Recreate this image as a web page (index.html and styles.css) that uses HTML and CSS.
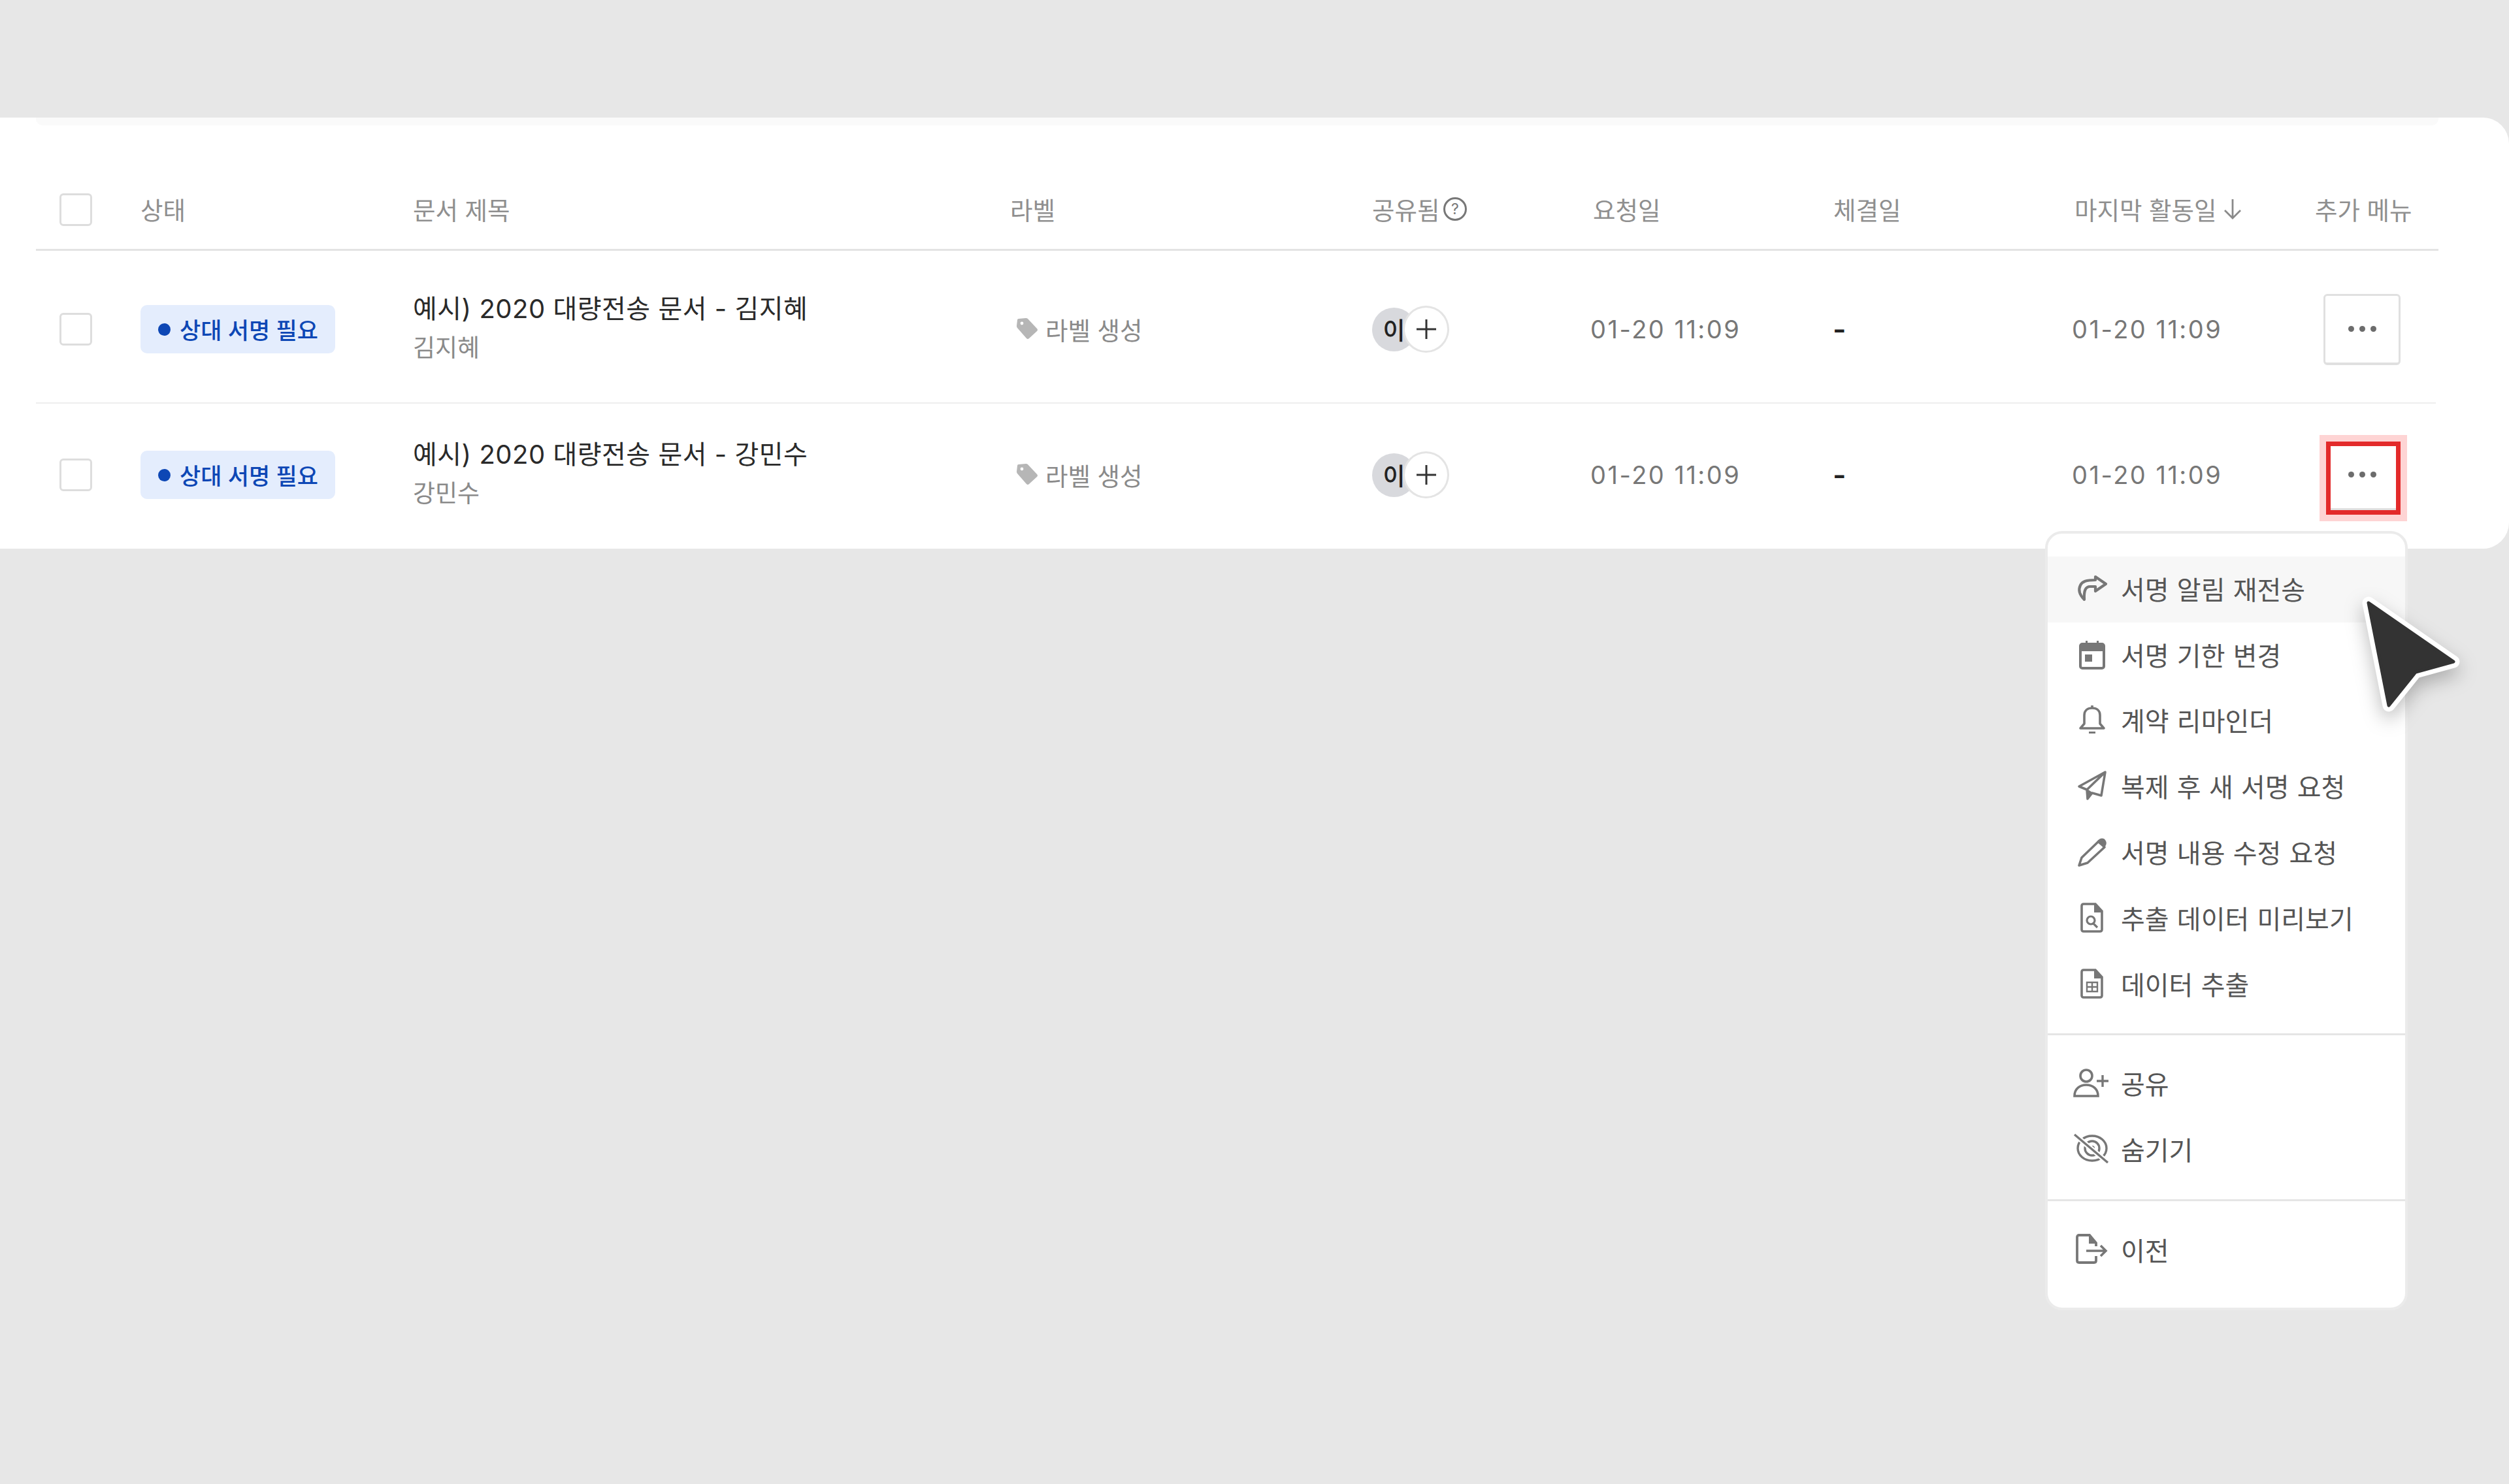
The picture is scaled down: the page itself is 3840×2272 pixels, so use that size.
FILE: index.html
```html
<!DOCTYPE html>
<html lang="ko">
<head>
  <meta charset="UTF-8">
  <meta name="viewport" content="width=device-width, initial-scale=1.0">
  <title>문서 목록</title>
  <link rel="stylesheet" href="styles.css">
</head>
<body>
  <div class="page">
    <div class="panel">
      <div class="panel-strip"></div>

      <div class="row row-head">
        <div class="cell-check"><span class="checkbox"></span></div>
        <div>상태</div>
        <div>문서 제목</div>
        <div>라벨</div>
        <div class="head-icon">공유됨
          <svg class="help" width="38" height="38" viewBox="0 0 38 38"><circle cx="19" cy="19" r="16.5" fill="none" stroke="#777" stroke-width="3"/><text x="19" y="27" text-anchor="middle" font-size="23" fill="#777">?</text></svg>
        </div>
        <div>요청일</div>
        <div>체결일</div>
        <div class="head-icon head-sort">마지막 활동일
          <svg width="30" height="34" viewBox="0 0 30 34"><path d="M15 2V31M3 19L15 31L27 19" fill="none" stroke="#8a8a8a" stroke-width="2.8"/></svg>
        </div>
        <div>추가 메뉴</div>
      </div>

      <div class="row row-first">
        <div class="cell-check"><span class="checkbox"></span></div>
        <div><span class="badge"><i class="badge-dot"></i>상대 서명 필요</span></div>
        <div>
          <div class="doc-title">예시) 2020 대량전송 문서 - 김지혜</div>
          <div class="doc-sub">김지혜</div>
        </div>
        <div class="label-cell">
          <svg width="34" height="32" viewBox="0 0 34 32"><path d="M2 3Q2 1 4 1L15 0Q17 0 18 1L32 16Q34 18 32 20L20 31Q18 33 16 31L2 15Q1 14 1 12Z" fill="#b6b6b6"/><circle cx="9" cy="8" r="2.4" fill="#fff"/></svg>
          라벨 생성
        </div>
        <div class="avatars"><span class="avatar">이</span><span class="avatar-add"><svg width="32" height="32" viewBox="0 0 32 32"><path d="M16 1V31M1 16H31" stroke="#333" stroke-width="3"/></svg></span></div>
        <div class="date">01-20 11:09</div>
        <div class="dash">-</div>
        <div class="date">01-20 11:09</div>
        <div><button class="more"><i></i><i></i><i></i></button></div>
      </div>

      <div class="row row-last">
        <div class="cell-check"><span class="checkbox"></span></div>
        <div><span class="badge"><i class="badge-dot"></i>상대 서명 필요</span></div>
        <div>
          <div class="doc-title">예시) 2020 대량전송 문서 - 강민수</div>
          <div class="doc-sub">강민수</div>
        </div>
        <div class="label-cell">
          <svg width="34" height="32" viewBox="0 0 34 32"><path d="M2 3Q2 1 4 1L15 0Q17 0 18 1L32 16Q34 18 32 20L20 31Q18 33 16 31L2 15Q1 14 1 12Z" fill="#b6b6b6"/><circle cx="9" cy="8" r="2.4" fill="#fff"/></svg>
          라벨 생성
        </div>
        <div class="avatars"><span class="avatar">이</span><span class="avatar-add"><svg width="32" height="32" viewBox="0 0 32 32"><path d="M16 1V31M1 16H31" stroke="#333" stroke-width="3"/></svg></span></div>
        <div class="date">01-20 11:09</div>
        <div class="dash">-</div>
        <div class="date">01-20 11:09</div>
        <div><button class="more"><i></i><i></i><i></i></button></div>
      </div>
    </div>

    <!-- annotation over the second row's button -->
    <div class="highlight"></div>

    <div class="menu">
      <div class="menu-group menu-group-top">
        <div class="menu-item active">
          <svg class="icon" viewBox="0 0 48 48"><path d="M29 6L45 17L29 28V21H21C14 21 11 27 12 41C5 34 2 27 6 19C9 13 15 11 29 11Z" fill="none" stroke="#777" stroke-width="4.2" stroke-linejoin="round"/></svg>
          서명 알림 재전송
        </div>
        <div class="menu-item">
          <svg class="icon" viewBox="0 0 48 48"><rect x="6" y="8" width="36" height="37" rx="3" fill="none" stroke="#777" stroke-width="4"/><path d="M5 9H43V19H5ZM14 3H17V9H14ZM31 3H34V9H31ZM13 24H24V35H13Z" fill="#777"/></svg>
          서명 기한 변경
        </div>
        <div class="menu-item">
          <svg class="icon" viewBox="0 0 48 48"><path d="M6 37L12 30V17C12 10 17 6 24 6C31 6 36 10 36 17V30L42 37ZM24 2V6" fill="none" stroke="#777" stroke-width="3.6" stroke-linejoin="round"/><path d="M19 42H29V45H19Z" fill="#777"/></svg>
          계약 리마인더
        </div>
        <div class="menu-item">
          <svg class="icon" viewBox="0 0 48 48"><path d="M44 3L4 25L16 30L17 44L24 35L38 39ZM44 3L16 30" fill="none" stroke="#777" stroke-width="3.6" stroke-linejoin="round"/><path d="M15 28L24 34L17 44Z" fill="#777"/></svg>
          복제 후 새 서명 요청
        </div>
        <div class="menu-item">
          <svg class="icon" viewBox="0 0 48 48"><path d="M4 45L8 33L34 8L43 17L17 41Z" fill="none" stroke="#777" stroke-width="3.6" stroke-linejoin="round"/><path d="M31 9C35 3 41 2 44 6C47 10 46 14 42 18Z" fill="#777"/></svg>
          서명 내용 수정 요청
        </div>
        <div class="menu-item">
          <svg class="icon" viewBox="0 0 48 48"><path d="M11 3H29L39 14V42Q39 45 36 45H11Q8 45 8 42V6Q8 3 11 3Z" fill="none" stroke="#777" stroke-width="3.6"/><path d="M27 3L40 16H27Z" fill="#777"/><circle cx="22" cy="28" r="6" fill="none" stroke="#777" stroke-width="3.2"/><path d="M26 33L32 39" stroke="#777" stroke-width="3.2"/></svg>
          추출 데이터 미리보기
        </div>
        <div class="menu-item">
          <svg class="icon" viewBox="0 0 48 48"><path d="M11 3H29L39 14V42Q39 45 36 45H11Q8 45 8 42V6Q8 3 11 3Z" fill="none" stroke="#777" stroke-width="3.6"/><path d="M27 3L40 16H27Z" fill="#777"/><path d="M16 22H32V36H16ZM24 22V36M16 29H32" fill="none" stroke="#777" stroke-width="2.4"/></svg>
          데이터 추출
        </div>
      </div>
      <div class="menu-group">
        <div class="menu-item">
          <svg class="icon" viewBox="0 0 48 48"><circle cx="15" cy="13" r="9" fill="none" stroke="#777" stroke-width="3.6"/><path d="M-3 44C-3 33 5 27 15 27C25 27 33 33 33 44Z" fill="none" stroke="#777" stroke-width="3.6"/><path d="M31 21H49M40 12V30" stroke="#777" stroke-width="3.4"/></svg>
          공유
        </div>
        <div class="menu-item">
          <svg class="icon" viewBox="0 0 48 48"><ellipse cx="24" cy="23" rx="22" ry="19" fill="none" stroke="#777" stroke-width="3.4"/><circle cx="24" cy="23" r="11" fill="none" stroke="#777" stroke-width="3.4"/><circle cx="24" cy="23" r="4" fill="#777"/><path d="M-3 2L48 45" stroke="#fff" stroke-width="8"/><path d="M-3 2L48 45" stroke="#777" stroke-width="3.4"/></svg>
          숨기기
        </div>
      </div>
      <div class="menu-group menu-group-bottom">
        <div class="menu-item">
          <svg class="icon" viewBox="0 0 48 48"><path d="M30 19V14L20 2H4Q1 2 1 5V41Q1 44 4 44H27Q30 44 30 41V34" fill="none" stroke="#777" stroke-width="3.8"/><path d="M19 2L31 15H19Z" fill="#777"/><path d="M15 26H45M37 18L45 26L37 34" fill="none" stroke="#777" stroke-width="3.6"/></svg>
          이전
        </div>
      </div>
    </div>

    <svg class="cursor" width="190" height="190" viewBox="0 0 190 190"><path d="M25 23L155 113L97 129L56 180Z" fill="#333" stroke="#fff" stroke-width="19" stroke-linejoin="round"/><path d="M25 23L155 113L97 129L56 180Z" fill="#333" stroke="#333" stroke-width="5" stroke-linejoin="round"/></svg>
  </div>
</body>
</html>
```

FILE: styles.css
```css
* {
  box-sizing: border-box;
}

body {
  font-family: Inter, "Noto Sans CJK KR", sans-serif;
  margin: 0;
  background: #e7e7e7;
  color: #222;
}

.page {
  position: relative;
  height: 2272px;
  padding-top: 180px;
  overflow: hidden;
}

.panel {
  background: #fff;
  border-radius: 0 40px 40px 0;
  padding: 0 108px 0 55px;
  height: 660px;
}

.panel-strip {
  height: 12px;
  background: #fafafa;
  border-radius: 0 0 10px 10px;
}

.row {
  display: grid;
  grid-template-columns: 160px 417px 914px 554px 338px 368px 369px 368px 189px;
  align-items: center;
  font-size: 37.5px;
}

.row-head {
  height: 192px;
  padding-top: 99px;
  align-items: start;
  border-bottom: 3px solid #e3e3e3;
  color: #8f8f8f;
  margin-bottom: 8px;
}

.row-head > div {
  height: 60px;
  display: flex;
  align-items: center;
  padding-bottom: 3px;
}

.row-head > .cell-check {
  padding-bottom: 0;
}

.row-first {
  height: 226px;
  border-bottom: 2px solid #eee;
  margin-right: 4px;
}

.row-last {
  height: 222px;
  padding-bottom: 4px;
}

.cell-check {
  padding-left: 36px;
}

.checkbox {
  display: block;
  width: 50px;
  height: 50px;
  border: 3px solid #ddd;
  border-radius: 6px;
  background: #fff;
}

.head-icon {
  gap: 4px;
}

.head-sort {
  gap: 9px;
}

.badge {
  display: inline-flex;
  align-items: center;
  height: 74px;
  width: 298px;
  padding-left: 27px;
  padding-bottom: 2px;
  gap: 14px;
  border-radius: 10px;
  background: #e4edfd;
  color: #0d47b5;
  font-size: 35px;
  font-weight: 500;
}

.badge-dot {
  width: 19px;
  height: 19px;
  border-radius: 50%;
  background: #0d47b5;
  margin-top: 2px;
}

.doc-title {
  font-size: 40px;
  letter-spacing: 0.5px;
  line-height: 60px;
  margin-top: -4px;
  margin-bottom: 2px;
  color: #2a2a2a;
}

.doc-sub {
  font-size: 37px;
  line-height: 56px;
  color: #8a8a8a;
}

.label-cell {
  display: flex;
  align-items: center;
  gap: 11px;
  padding-left: 9px;
  padding-bottom: 2px;
  color: #8a8a8a;
}

.avatars {
  display: flex;
  align-items: center;
}

.avatar {
  width: 67px;
  height: 67px;
  border-radius: 50%;
  background: #d8d9dd;
  font-size: 37px;
  font-weight: 500;
  color: #222;
  display: flex;
  align-items: center;
  justify-content: center;
}

.avatar-add {
  width: 71px;
  height: 72px;
  margin-left: -20px;
  border-radius: 50%;
  border: 3px solid #e4e4e4;
  background: #fff;
  display: flex;
  align-items: center;
  justify-content: center;
}

.date {
  font-size: 38px;
  letter-spacing: 2.5px;
  color: #777;
  margin-left: -4px;
}

.dash {
  font-size: 44px;
  font-weight: 600;
  margin-left: -1px;
}

.more {
  display: flex;
  align-items: center;
  justify-content: center;
  gap: 8px;
  width: 118px;
  height: 109px;
  margin-left: 13px;
  border: 3px solid #e0e0e0;
  border-bottom-width: 4px;
  border-radius: 6px;
  background: #fff;
  padding: 0;
}

.more i {
  width: 9px;
  height: 9px;
  border-radius: 50%;
  background: #6c6c6c;
}

.highlight {
  position: absolute;
  left: 3560px;
  top: 676px;
  width: 114px;
  height: 112px;
  border: 7px solid #e32a2a;
  box-shadow: 0 0 0 10px #fed4d4;
}

.menu {
  position: absolute;
  left: 3130px;
  top: 813px;
  width: 555px;
  height: 1193px;
  background: #fff;
  border: 4px solid #ebebeb;
  border-radius: 26px;
  color: #555;
}

.menu-group {
  padding: 24px 0 25px;
  border-bottom: 3px solid #e5e5e5;
}

.menu-group-top {
  padding-top: 35px;
  padding-bottom: 24.4px;
}

.menu-group-bottom {
  padding-top: 26px;
  border-bottom: 0;
}

.menu-item {
  display: flex;
  align-items: center;
  gap: 20px;
  height: 100.8px;
  padding-left: 44px;
  padding-bottom: 3px;
  font-size: 40px;
  word-spacing: 1px;
}

.menu-item.active {
  background: #f7f7f7;
}

.icon {
  width: 48px;
  height: 48px;
  overflow: visible;
  flex-shrink: 0;
}

.cursor {
  position: absolute;
  left: 3600px;
  top: 900px;
  filter: drop-shadow(0 12px 14px rgba(0, 0, 0, 0.25));
}
```
